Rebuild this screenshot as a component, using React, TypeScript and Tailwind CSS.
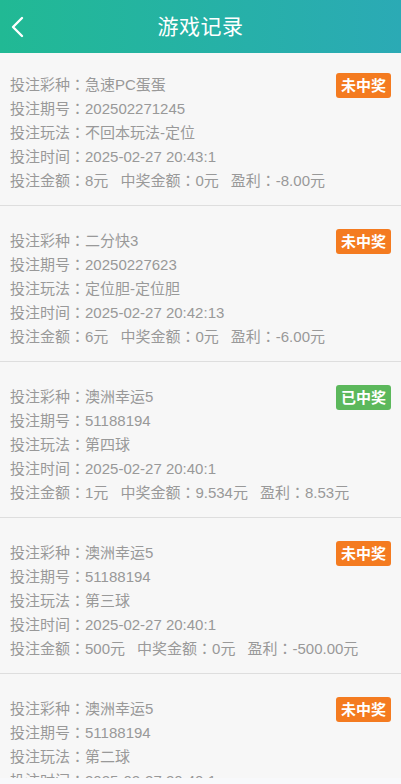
import React from "react";

type Rec = {
  kind: string;
  issue: string;
  play: string;
  time: string;
  amount: string;
  win: string;
  profit: string;
  won: boolean;
};

const records: Rec[] = [
  { kind: "急速PC蛋蛋", issue: "202502271245", play: "不回本玩法-定位", time: "2025-02-27 20:43:1", amount: "8元", win: "0元", profit: "-8.00元", won: false },
  { kind: "二分快3", issue: "20250227623", play: "定位胆-定位胆", time: "2025-02-27 20:42:13", amount: "6元", win: "0元", profit: "-6.00元", won: false },
  { kind: "澳洲幸运5", issue: "51188194", play: "第四球", time: "2025-02-27 20:40:1", amount: "1元", win: "9.534元", profit: "8.53元", won: true },
  { kind: "澳洲幸运5", issue: "51188194", play: "第三球", time: "2025-02-27 20:40:1", amount: "500元", win: "0元", profit: "-500.00元", won: false },
  { kind: "澳洲幸运5", issue: "51188194", play: "第二球", time: "2025-02-27 20:40:1", amount: "500元", win: "0元", profit: "-500.00元", won: false },
];

function C() {
  return <span style={{ fontFamily: '"Noto Sans CJK TC", sans-serif' }}>：</span>;
}

function Line({ children }: { children: React.ReactNode }) {
  return <div className="h-[24px] leading-[24px]">{children}</div>;
}

export default function App() {
  return (
    <div
      className="h-[784px] overflow-hidden bg-[#f7f7f7]"
      style={{ fontFamily: '"Liberation Sans", "Noto Sans CJK SC", sans-serif' }}
    >
      <div className="relative h-[53px] flex items-center justify-center bg-gradient-to-r from-[#21b994] to-[#2baab5]">
        <svg
          className="absolute left-[9px] top-[16px]"
          width="16"
          height="22"
          viewBox="0 0 16 22"
          fill="none"
        >
          <path d="M13 2 L4 11 L13 20" stroke="white" strokeWidth="2.4" strokeLinecap="round" strokeLinejoin="round" />
        </svg>
        <span className="text-white text-[21px] leading-none tracking-[0.5px]">游戏记录</span>
      </div>
      <div>
        {records.map((r, i) => (
          <div
            key={i}
            className={`px-[10px] pb-[13px] border-b border-[#dedede] ${i === 0 ? "pt-[19px]" : "pt-[22px]"}`}
          >
            <div
              className={`float-right mt-[1px] h-[25px] px-[5px] rounded-[3px] flex items-center text-white font-bold text-[15px] leading-none ${r.won ? "bg-[#5cb85c]" : "bg-[#f47b20]"}`}
            >
              {r.won ? "已中奖" : "未中奖"}
            </div>
            <div className="text-[15px] text-[#999] whitespace-nowrap">
              <Line>投注彩种<C />{r.kind}</Line>
              <Line>投注期号<C />{r.issue}</Line>
              <Line>投注玩法<C />{r.play}</Line>
              <Line>投注时间<C />{r.time}</Line>
              <Line>
                <span>投注金额<C />{r.amount}</span>
                <span className="ml-[12px]">中奖金额<C />{r.win}</span>
                <span className="ml-[12px]">盈利<C />{r.profit}</span>
              </Line>
            </div>
          </div>
        ))}
      </div>
      <div className="fixed bottom-0 left-0 right-0 h-[6px] bg-[#f8f9fb]" />
    </div>
  );
}
